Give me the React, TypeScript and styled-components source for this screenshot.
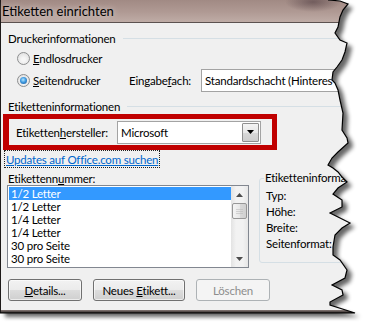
import React from 'react';
import styled, { createGlobalStyle } from 'styled-components';

const GlobalStyle = createGlobalStyle`
  html, body {
    margin: 0;
    padding: 0;
    background: #ffffff;
  }
  body {
    font-family: Lato, "Liberation Sans", sans-serif;
    font-size: 11.5px;
    letter-spacing: -0.2px;
    color: #000000;
  }
`;

// right edge of the dialog, torn off in the screenshot
const TEAR: [number, number][] = [
  [328, 0], [340, 1], [348, 4], [343, 10], [340, 17], [338, 27], [335, 33],
  [340, 40], [347, 43], [345, 52], [342, 60], [337, 67], [333, 72], [332, 80],
  [335, 83], [338, 90], [340, 100], [343, 113], [342, 130], [347, 138],
  [348, 143], [338, 152], [332, 158], [328, 165], [333, 168], [338, 172],
  [342, 177], [347, 182], [338, 188], [333, 194], [342, 200], [342, 207],
  [330, 213], [338, 217], [350, 223], [342, 228], [335, 235], [333, 247],
  [333, 255], [340, 260], [347, 270], [345, 278], [332, 285], [342, 290],
  [343, 295], [330, 302], [330, 305], [355, 313],
];

const tearLine = TEAR.map(([x, y]) => `${x},${y}`).join(' ');
const dialogShape = `0,0 ${tearLine} 0,313`;
const outsidePath = `M0 0H374V330H0Z M${dialogShape.replace(/ /g, ' L')}Z`;

const LIST_ITEMS = [
  '1/2 Letter',
  '1/2 Letter',
  '1/4 Letter',
  '1/4 Letter',
  '30 pro Seite',
  '30 pro Seite',
];

const INFO_LABELS = ['Typ:', 'Höhe:', 'Breite:', 'Seitenformat:'];

export default function App() {
  return (
    <Page>
      <GlobalStyle />
      <Dialog>
        <TitleBar>Etiketten einrichten</TitleBar>
        <Body>
          <GroupHeader>
            <span>Druckerinformationen</span>
            <Rule />
          </GroupHeader>

          <RadioRow height={21} marginTop={3}>
            <Option width={112}>
              <Radio />
              <span>
                <u>E</u>ndlosdrucker
              </span>
            </Option>
          </RadioRow>
          <RadioRow height={23}>
            <Option width={112}>
              <Radio checked />
              <span>
                <u>S</u>eitendrucker
              </span>
            </Option>
            <FieldLabel width={72}>
              Eingabe<u>f</u>ach:
            </FieldLabel>
            <Combo width={220}>
              <ComboText>Standardschacht (Hinteres Fach)</ComboText>
            </Combo>
          </RadioRow>

          <GroupHeader marginTop={7}>
            <span>Etiketteninformationen</span>
            <Rule />
          </GroupHeader>

          <Highlight>
            <FieldLabel width={101}>
              Etiketten<u>h</u>ersteller:
            </FieldLabel>
            <Combo width={144}>
              <ComboText>Microsoft</ComboText>
              <DropButton>
                <svg width="7" height="4" viewBox="0 0 7 4">
                  <path d="M0 0H7L3.5 4Z" fill="#000" />
                </svg>
              </DropButton>
            </Combo>
          </Highlight>

          <LinkRow>
            <FocusRing>
              <Link href="#">Updates auf Office.com suchen</Link>
            </FocusRing>
          </LinkRow>

          <Columns>
            <ListColumn>
              <Caption>
                Etikettenn<u>u</u>mmer:
              </Caption>
              <ListBox>
                <Items>
                  {LIST_ITEMS.map((item, i) => (
                    <Item key={i} selected={i === 0}>
                      {item}
                    </Item>
                  ))}
                </Items>
                <ScrollBar>
                  <ArrowButton>
                    <svg width="7" height="4" viewBox="0 0 7 4">
                      <path d="M0 4H7L3.5 0Z" fill="#4d4d4d" />
                    </svg>
                  </ArrowButton>
                  <Thumb>
                    <Grip />
                  </Thumb>
                  <Track />
                  <ArrowButton>
                    <svg width="7" height="4" viewBox="0 0 7 4">
                      <path d="M0 0H7L3.5 4Z" fill="#4d4d4d" />
                    </svg>
                  </ArrowButton>
                </ScrollBar>
              </ListBox>
            </ListColumn>

            <InfoGroup>
              <Legend>Etiketteninformationen</Legend>
              {INFO_LABELS.map((label) => (
                <InfoRow key={label}>{label}</InfoRow>
              ))}
            </InfoGroup>
          </Columns>

          <ButtonRow>
            <Button width={74}>
              <u>D</u>etails...
            </Button>
            <Button width={92}>
              Neues <u>E</u>tikett...
            </Button>
            <Button width={74} disabled>
              Löschen
            </Button>
          </ButtonRow>
        </Body>
        <BottomFrame />
      </Dialog>

      <TornEdge width="374" height="330" viewBox="0 0 374 330">
        <defs>
          <clipPath id="outside">
            <path d={outsidePath} clipRule="evenodd" />
          </clipPath>
          <filter id="soft" x="-10%" y="-10%" width="120%" height="120%">
            <feGaussianBlur stdDeviation="2.2" />
          </filter>
        </defs>
        <path d={outsidePath} fill="#ffffff" fillRule="evenodd" />
        <g clipPath="url(#outside)">
          <polygon
            points={dialogShape}
            transform="translate(5 4)"
            fill="#000000"
            opacity="0.6"
            filter="url(#soft)"
          />
        </g>
        <polyline
          points={`${tearLine} 0,313`}
          fill="none"
          stroke="#000000"
          strokeWidth="1.2"
        />
      </TornEdge>
    </Page>
  );
}

const Page = styled.div`
  position: relative;
  width: 374px;
  height: 330px;
  overflow: hidden;
  background: #ffffff;
`;

const Dialog = styled.div`
  width: 372px;
  height: 313px;
  box-sizing: border-box;
  display: flex;
  flex-direction: column;
  border-left: 1px solid #1e1a19;
  background: #f0f0f0;
`;

const TitleBar = styled.div`
  flex: none;
  height: 22px;
  display: flex;
  align-items: center;
  padding-left: 1px;
  font-size: 13px;
  letter-spacing: 0;
  text-shadow: 0 0 6px rgba(255, 255, 255, 0.7);
  background:
    radial-gradient(ellipse 28px 10px at 312px 2px, rgba(80, 60, 65, 0.6), transparent),
    linear-gradient(to bottom, #a18a84 0%, #b09a94 55%, #bfaca6 100%);
`;

const Body = styled.div`
  flex: 1;
  border-top: 1px solid #5c5250;
  padding: 8px 0 0 6px;
  display: flex;
  flex-direction: column;
`;

const BottomFrame = styled.div`
  flex: none;
  height: 3px;
  background: linear-gradient(to bottom, #8a7d79, #262120);
`;

const GroupHeader = styled.div<{ marginTop?: number }>`
  height: 14px;
  margin-top: ${(p) => p.marginTop ?? 0}px;
  display: flex;
  align-items: center;
  gap: 7px;
  padding-left: 1px;
`;

const Rule = styled.div`
  flex: 1;
  height: 1px;
  background: #d5dfe5;
`;

const RadioRow = styled.div<{ height: number; marginTop?: number }>`
  height: ${(p) => p.height}px;
  margin-top: ${(p) => p.marginTop ?? 0}px;
  display: flex;
  align-items: center;
  padding-left: 10px;
`;

const Option = styled.label<{ width: number }>`
  flex: none;
  width: ${(p) => p.width}px;
  display: flex;
  align-items: center;
  gap: 3px;
`;

const Radio = styled.span<{ checked?: boolean }>`
  flex: none;
  width: 13px;
  height: 13px;
  box-sizing: border-box;
  border-radius: 50%;
  border: 1px solid #8d8e8f;
  background: radial-gradient(circle at 50% 60%, #f6f6f6 20%, #dadada 100%);
  display: flex;
  align-items: center;
  justify-content: center;

  &::after {
    content: '';
    display: ${(p) => (p.checked ? 'block' : 'none')};
    width: 7px;
    height: 7px;
    border-radius: 50%;
    background: radial-gradient(circle at 45% 40%, #b4e6ff 0%, #3f9ae0 45%, #1a4f8f 100%);
  }
`;

const FieldLabel = styled.span<{ width: number }>`
  flex: none;
  width: ${(p) => p.width}px;
  white-space: nowrap;
`;

const Combo = styled.div<{ width: number }>`
  flex: none;
  width: ${(p) => p.width}px;
  height: 23px;
  box-sizing: border-box;
  border: 1px solid #a3a3a3;
  background: #ffffff;
  display: flex;
  align-items: center;
  padding: 1px;
`;

const ComboText = styled.span`
  flex: 1;
  padding-left: 2px;
  white-space: nowrap;
  overflow: hidden;
`;

const DropButton = styled.div`
  flex: none;
  width: 17px;
  height: 19px;
  box-sizing: border-box;
  border: 1px solid #8f8f8f;
  border-radius: 1px;
  background: linear-gradient(to bottom, #f4f4f4 0%, #e8e8e8 50%, #d8d8d8 51%, #cdcdcd 100%);
  display: flex;
  align-items: center;
  justify-content: center;
`;

const Highlight = styled.div`
  height: 36px;
  width: 274px;
  box-sizing: border-box;
  margin: 1px 0 0 -4px;
  border: 5px solid #c00000;
  border-left-width: 6px;
  padding-left: 7px;
  display: flex;
  align-items: center;
`;

const LinkRow = styled.div`
  height: 18px;
  display: flex;
  margin-left: -3px;
`;

const FocusRing = styled.div`
  border: 1px dotted #202020;
  padding: 0 1px;
  display: flex;
  align-items: center;
`;

const Link = styled.a`
  color: #0066cc;
  text-decoration: underline;
`;

const Columns = styled.div`
  margin-top: 3px;
  display: flex;
  align-items: flex-start;
`;

const ListColumn = styled.div`
  flex: none;
  width: 242px;
  display: flex;
  flex-direction: column;
`;

const Caption = styled.div`
  height: 14px;
  display: flex;
  align-items: center;
  padding-left: 1px;
`;

const ListBox = styled.div`
  height: 83px;
  box-sizing: border-box;
  border: 1px solid #828790;
  background: #ffffff;
  display: flex;
  padding: 1px 0 1px 1px;
`;

const Items = styled.div`
  flex: 1;
  display: flex;
  flex-direction: column;
`;

const Item = styled.div<{ selected?: boolean }>`
  height: 13px;
  line-height: 13px;
  padding-left: 2px;
  white-space: nowrap;
  background: ${(p) => (p.selected ? '#3399ff' : 'transparent')};
  color: ${(p) => (p.selected ? '#ffffff' : '#000000')};
`;

const ScrollBar = styled.div`
  flex: none;
  width: 17px;
  margin-top: -1px;
  margin-bottom: -1px;
  display: flex;
  flex-direction: column;
  background: linear-gradient(to right, #e3e3e3, #f2f2f2 30%, #f2f2f2 70%, #e6e6e6);
`;

const ArrowButton = styled.div`
  flex: none;
  height: 17px;
  display: flex;
  align-items: center;
  justify-content: center;
`;

const Thumb = styled.div`
  flex: none;
  height: 16px;
  margin: 0 1px;
  box-sizing: border-box;
  border: 1px solid #979797;
  border-radius: 2px;
  background: linear-gradient(to right, #f4f4f4, #e8e8e8 50%, #d9d9d9 51%, #d0d0d0);
  display: flex;
  align-items: center;
  justify-content: center;
`;

const Grip = styled.div`
  width: 7px;
  height: 5px;
  background: repeating-linear-gradient(to bottom, #b5b5b5 0 1px, transparent 1px 2px);
  opacity: 0.5;
`;

const Track = styled.div`
  flex: 1;
`;

const InfoGroup = styled.fieldset`
  flex: none;
  width: 120px;
  margin: 0 0 0 10px;
  padding: 3px 0 10px 4px;
  border: 1px solid #d5dfe5;
  border-radius: 3px;
`;

const Legend = styled.legend`
  padding: 0 1px;
  white-space: nowrap;
  line-height: 14px;
`;

const InfoRow = styled.div`
  height: 16px;
  line-height: 16px;
  padding-left: 2px;
  white-space: nowrap;
`;

const ButtonRow = styled.div`
  margin-top: 11px;
  display: flex;
  gap: 11px;
  padding-left: 1px;
`;

const Button = styled.button<{ width: number }>`
  width: ${(p) => p.width}px;
  height: 22px;
  padding: 0;
  font-family: inherit;
  font-size: 11.5px;
  letter-spacing: -0.2px;
  color: #000000;
  border: 1px solid #707070;
  border-radius: 3px;
  background: linear-gradient(to bottom, #f2f2f2 0%, #ebebeb 50%, #dddddd 51%, #cfcfcf 100%);
  box-shadow: inset 0 0 0 1px rgba(255, 255, 255, 0.6);

  &:disabled {
    color: #8d8d8d;
    border-color: #adb2b5;
    background: #f4f4f4;
    box-shadow: none;
  }
`;

const TornEdge = styled.svg`
  position: absolute;
  left: 0;
  top: 0;
  pointer-events: none;
`;
